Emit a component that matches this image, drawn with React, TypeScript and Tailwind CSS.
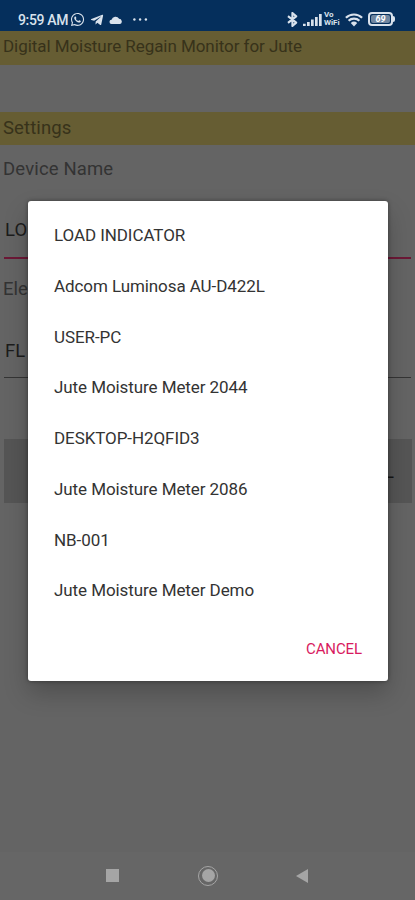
import type React from "react"
import { FaWhatsapp, FaTelegramPlane } from "react-icons/fa"

const devices = [
  "LOAD INDICATOR",
  "Adcom Luminosa AU-D422L",
  "USER-PC",
  "Jute Moisture Meter 2044",
  "DESKTOP-H2QFID3",
  "Jute Moisture Meter 2086",
  "NB-001",
  "Jute Moisture Meter Demo",
]

const StatusBar: React.FC = () => (
  <header className="flex h-[31px] items-start bg-[#052f5c] pl-[18px] pr-[20px] pt-[12px] text-[#d9e2ec]">
    <span className="w-[52px] whitespace-nowrap text-[14px] font-medium leading-[16px] tracking-[-0.35px]">9:59 AM</span>
    <FaWhatsapp className="h-[15px] w-[15px]" />
    <FaTelegramPlane className="ml-[5px] mt-px h-[14px] w-[14px]" />
    <svg className="ml-[5px] mt-[3px]" width="14" height="9" viewBox="0 0 13 9" fill="currentColor">
      <path d="M2.2 9A2.1 2.1 0 0 1 2 4.8 4.2 4.2 0 0 1 9.6 3.8 2.7 2.7 0 0 1 10.6 9Z" />
    </svg>
    <svg className="ml-[10px] mt-[6px]" width="15" height="3" viewBox="0 0 15 3" fill="currentColor">
      <circle cx="1.4" cy="1.5" r="1.2" />
      <circle cx="7.1" cy="1.5" r="1.2" />
      <circle cx="12.9" cy="1.5" r="1.2" />
    </svg>

    <svg
      className="ml-auto"
      width="11"
      height="15"
      viewBox="0 0 11 15"
      fill="none"
      stroke="currentColor"
      strokeWidth="2.1"
      strokeLinejoin="round"
    >
      <path d="M1 4.2 9.2 10.6 5.4 14V1L9.2 4.4 1 10.8" />
    </svg>
    <svg className="ml-[5px] mt-[2px]" width="19" height="12" viewBox="0 0 19 12" fill="currentColor">
      <path d="M0 9.8h2.7V12H0zM4 8h2.7v4H4zM8 5.6h2.7V12H8zM12 3h2.7v9H12zM16 0h2.7v12H16z" />
    </svg>
    <span className="-mt-px ml-[2px] flex w-[18px] flex-col text-[8px] font-bold leading-[8px]">
      <span>Vo</span>
      <span className="whitespace-nowrap">WiFi</span>
    </span>
    <svg
      className="ml-[3px] mt-px"
      width="18"
      height="14"
      viewBox="0 0 18 14"
      fill="none"
      stroke="currentColor"
      strokeWidth="2.2"
    >
      <path d="M.9 4.8a11.6 11.6 0 0 1 16.2 0M3.6 7.7a7.8 7.8 0 0 1 10.8 0" />
      <path d="M5.8 10.1a4.7 4.7 0 0 1 6.4 0L9 13.6Z" fill="currentColor" stroke="none" />
    </svg>
    <div className="ml-[5px] flex items-center">
      <div className="flex h-[14px] w-[25px] items-center justify-center rounded-[4px] border-2 border-current p-px">
        <div className="flex h-full w-full items-center justify-center rounded-[2px] bg-[#6f86a0] text-[9px] font-bold italic leading-none text-white">
          69
        </div>
      </div>
      <div className="h-[6px] w-[2px] rounded-r-full bg-current" />
    </div>
  </header>
)

const SettingsScreen: React.FC = () => (
  <main className="flex grow flex-col text-[#333333]">
    <h1 className="h-[34px] bg-[#665d33] pl-[3px] text-[17px] leading-[31px] tracking-[-0.06px] text-[#37321a]">
      Digital Moisture Regain Monitor for Jute
    </h1>
    <h2 className="mt-[47px] h-[33px] bg-[#665d33] pl-[3px] text-[18.5px] leading-[33px] tracking-[0.1px] text-[#37321a]">
      Settings
    </h2>
    <label className="mt-[12px] pl-[3px] text-[18.5px] leading-[24px] tracking-[0.15px]">Device Name</label>
    <div className="mx-1 mt-[37px] h-[41px] border-b-2 border-[#6c1836] pl-px text-[18.5px] leading-[25px] text-[#1c1c1c]">
      LO
    </div>
    <label className="mt-[18px] pl-[3px] text-[18.5px] leading-[24px]">Ele</label>
    <div className="mx-1 mt-[37px] h-[40px] border-b border-[#353535] pl-px text-[18.5px] leading-[26px] text-[#1c1c1c]">
      FL
    </div>
    <div className="ml-1 mr-[3px] mt-[61px] flex h-[64px] items-center justify-end bg-[#555555] pr-[18px] text-[18px] text-[#161616]">
      L
    </div>
  </main>
)

const NavigationBar: React.FC = () => (
  <nav className="flex h-[48px] items-center bg-[#666666] pb-px pl-[106px] text-[#a5a5a5]">
    <div className="h-[13px] w-[13px] bg-current" />
    <div className="ml-[79px] flex h-[20px] w-[20px] items-center justify-center rounded-full border-[1.5px] border-current">
      <div className="h-[13px] w-[13px] rounded-full bg-current" />
    </div>
    <svg className="ml-[78px]" width="12" height="14" viewBox="0 0 12 14" fill="currentColor">
      <path d="M12 0v14L0 7Z" />
    </svg>
  </nav>
)

const DeviceDialog: React.FC = () => (
  <div
    role="dialog"
    className="absolute left-[28px] top-[201px] flex h-[480px] w-[360px] flex-col rounded-[3px] bg-white pt-[9px] shadow-[0_12px_24px_rgba(0,0,0,0.22),0_0_4px_rgba(0,0,0,0.4)]"
  >
    <ul>
      {devices.map((name) => (
        <li key={name} className="flex h-[50.75px] items-center pl-[26px] pt-px text-[17px] tracking-[-0.08px] text-[#333333]">
          {name}
        </li>
      ))}
    </ul>
    <button className="mr-[26px] mt-[21px] self-end text-[15px] leading-[24px] tracking-[-0.1px] text-[#d81b60]">
      CANCEL
    </button>
  </div>
)

export default function App() {
  return (
    <div className="relative flex h-[900px] w-[415px] flex-col overflow-hidden bg-[#646464] font-[Roboto,sans-serif]">
      <StatusBar />
      <SettingsScreen />
      <NavigationBar />
      <DeviceDialog />
    </div>
  )
}
